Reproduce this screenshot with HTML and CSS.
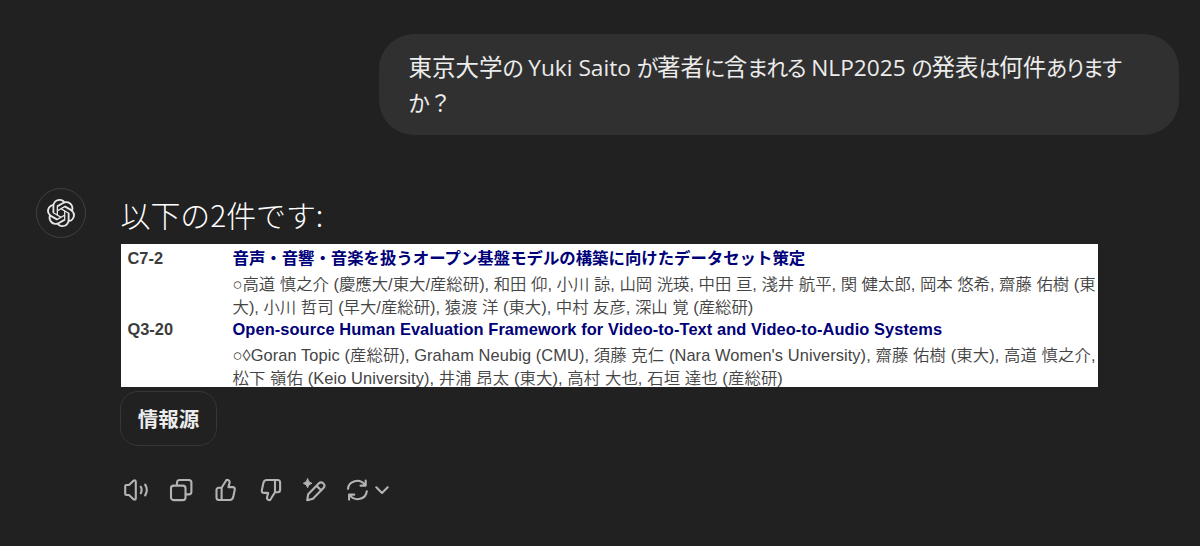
FILE: index.html
```html
<!DOCTYPE html>
<html lang="ja">
<head>
<meta charset="utf-8">
<title>Chat</title>
<link rel="stylesheet" href="styles.css">
</head>
<body>
<main class="chat">
  <div class="bubble">
    <span class="line">東京大学<span class="kana">の</span><span class="latin"> Yuki Saito </span><span class="kana">が</span>著者<span class="kana">に</span>含<span class="kana">まれる</span><span class="latin"> NLP2025 </span><span class="kana">の</span>発表<span class="kana">は</span>何件<span class="kana">あります</span></span>
    <span class="line"><span class="kana">か</span><span class="mark">？</span></span>
  </div>
  <section class="reply">
    <div class="avatar">
      <svg width="28" height="28" viewBox="0 0 24 24" fill="currentColor"><path d="M22.2819 9.8211a5.9847 5.9847 0 0 0-.5157-4.9108 6.0462 6.0462 0 0 0-6.5098-2.9A6.0651 6.0651 0 0 0 4.9807 4.1818a5.9847 5.9847 0 0 0-3.9977 2.9 6.0462 6.0462 0 0 0 .7427 7.0966 5.98 5.98 0 0 0 .511 4.9107 6.051 6.051 0 0 0 6.5146 2.9001A5.9847 5.9847 0 0 0 13.2599 24a6.0557 6.0557 0 0 0 5.7718-4.2058 5.9894 5.9894 0 0 0 3.9977-2.9001 6.0557 6.0557 0 0 0-.7475-7.0729zm-9.022 12.6081a4.4755 4.4755 0 0 1-2.8764-1.0408l.1419-.0804 4.7783-2.7582a.7948.7948 0 0 0 .3927-.6813v-6.7369l2.02 1.1686a.071.071 0 0 1 .038.052v5.5826a4.504 4.504 0 0 1-4.4945 4.4944zm-9.6607-4.1254a4.4708 4.4708 0 0 1-.5346-3.0137l.142.0852 4.783 2.7582a.7712.7712 0 0 0 .7806 0l5.8428-3.3685v2.3324a.0804.0804 0 0 1-.0332.0615L9.74 19.9502a4.4992 4.4992 0 0 1-6.1408-1.6464zM2.3408 7.8956a4.485 4.485 0 0 1 2.3655-1.9728V11.6a.7664.7664 0 0 0 .3879.6765l5.8144 3.3543-2.0201 1.1685a.0757.0757 0 0 1-.071 0l-4.8303-2.7865A4.504 4.504 0 0 1 2.3408 7.872zm16.5963 3.8558L13.1038 8.364 15.1192 7.2a.0757.0757 0 0 1 .071 0l4.8303 2.7913a4.4944 4.4944 0 0 1-.6765 8.1042v-5.6772a.79.79 0 0 0-.407-.667zm2.0107-3.0231l-.142-.0852-4.7735-2.7818a.7759.7759 0 0 0-.7854 0L9.409 9.2297V6.8974a.0662.0662 0 0 1 .0284-.0615l4.8303-2.7866a4.4992 4.4992 0 0 1 6.6802 4.66zM8.3065 12.863l-2.02-1.1638a.0804.0804 0 0 1-.038-.0567V6.0742a4.4992 4.4992 0 0 1 7.3757-3.4537l-.142.0805L8.704 5.459a.7948.7948 0 0 0-.3927.6813zm1.0976-2.3654l2.602-1.4998 2.6069 1.4998v2.9994l-2.5974 1.4997-2.6067-1.4997Z"/></svg>
    </div>
    <div class="content">
      <h1 class="heading">以下の2件です:</h1>
      <div class="papers">
        <div class="code">C7-2</div>
        <div class="paper">
          <div class="title"><span class="line">音声・音響・音楽を扱うオープン基盤モデルの構築に向けたデータセット策定</span></div>
          <div class="authors">
            <span class="line">○高道 慎之介 (慶應大/東大/産総研), 和田 仰, 小川 諒, 山岡 洸瑛, 中田 亘, 淺井 航平, 関 健太郎, 岡本 悠希, 齋藤 佑樹 (東</span>
            <span class="line">大), 小川 哲司 (早大/産総研), 猿渡 洋 (東大), 中村 友彦, 深山 覚 (産総研)</span>
          </div>
        </div>
        <div class="code">Q3-20</div>
        <div class="paper">
          <div class="title english"><span class="line">Open-source Human Evaluation Framework for Video-to-Text and Video-to-Audio Systems</span></div>
          <div class="authors english">
            <span class="line">○◊Goran Topic (産総研), Graham Neubig (CMU), 須藤 克仁 (Nara Women's University), 齋藤 佑樹 (東大), 高道 慎之介,</span>
            <span class="line">松下 嶺佑 (Keio University), 井浦 昂太 (東大), 高村 大也, 石垣 達也 (産総研)</span>
          </div>
        </div>
      </div>
      <button class="sources">情報源</button>
      <div class="actions">
        <svg width="28" height="28" viewBox="0 0 28 28"><path d="M4.200 10.2q0-1.2 1.2-1.2H8l4.200-4q2.600-1.700 2.600 1v16q0 2.700-2.600 1L8 19H5.400q-1.200 0-1.200-1.200zM19.800 10.800q1.700 3.200 0 6.400M24.200 8.600q3.200 5.400 0 10.800"/></svg>
        <svg width="28" height="28" viewBox="0 0 28 28"><rect x="5" y="9.600" width="14.500" height="14.500" rx="2.600"/><path d="M11 9V6.600Q11 4 13.600 4h9.200q2.600 0 2.600 2.600v9.200q0 2.600-2.600 2.600h-2.900"/></svg>
        <svg width="28" height="28" viewBox="0 0 28 28"><path id="thumb" d="M11.600 11.800 16 4.700q.9-1.300 2.300-.6 1.800 1 1.200 3l-1.100 4h4.100q2.900 0 2.200 3l-1.500 7q-.7 2.900-3.300 2.900H9q-2.500 0-2.500-2.500v-7.200q0-2.500 2.500-2.500zM11.600 11.800V24"/></svg>
        <svg width="28" height="28" viewBox="0 0 28 28"><use href="#thumb" transform="rotate(180 15.800 14)"/></svg>
        <svg width="28" height="28" viewBox="0 0 28 28"><path d="M8.200 24.300 9.200 18.200 19.700 7.400q2.300-2.200 4.700 0 2.200 2.400 0 4.700L13.900 22.700zM17.500 9.700l4.800 4.800"/><path class="solid" d="M8.600 2.900q.7 3.700 4.300 4.400-3.600.7-4.300 4.400Q7.900 8 4.300 7.300 7.900 6.600 8.600 2.900z"/></svg>
        <svg width="28" height="28" viewBox="0 0 28 28"><path d="M4 12.800C4.600 4.800 15.600 1.700 21 9M21.700 4.600v5h-5.200M22.800 15.200c-.6 8-11.600 11.100-17 3.800M5.100 23.600v-5h5.200"/></svg>
        <svg class="chevron" width="16" height="28" viewBox="0 0 16 28"><path d="M1.300 11.300 7 17l5.700-5.700"/></svg>
      </div>
    </div>
  </section>
</main>
</body>
</html>
```
FILE: styles.css
```css
* { box-sizing: border-box; }
body {
  margin: 0;
  background: #212121;
  font-family: "Liberation Sans", "Noto Sans CJK JP", sans-serif;
}
.chat {
  height: 546px;
  padding: 34px 21px 0 35.500px;
  display: flex;
  flex-direction: column;
  overflow: hidden;
}
.line { display: block; white-space: nowrap; }
.bubble {
  align-self: flex-end;
  width: 800px;
  height: 101px;
  padding: 15px 29.500px;
  border-radius: 35px;
  background: #303030;
  color: #ececec;
  font: 23.500px/35px "Noto Sans CJK JP", sans-serif;
}
.bubble .line { height: 35px; }
.kana { font-size: 21.800px; font-feature-settings: "palt"; letter-spacing: -1.150px; }
.latin { font-family: "Open Sans", sans-serif; font-size: 22.700px; }
.mark { font-size: 22px; margin-left: 1px; }
.reply { display: flex; gap: 35px; margin-top: 52.500px; }
.avatar {
  flex: none;
  width: 50px;
  height: 50px;
  display: grid;
  place-items: center;
  border: 1px solid #404040;
  border-radius: 50%;
  color: #e6e6e6;
}
.content { width: 977.500px; }
.heading {
  height: 56.500px;
  margin: 0;
  color: #fff;
  font: 300 29.900px/53px "Noto Sans CJK JP", sans-serif;
  white-space: nowrap;
}
.papers {
  height: 143px;
  display: grid;
  grid-template-columns: 105px 1fr;
  grid-template-rows: 71px 72px;
  padding-left: 7px;
  background: #fff;
  color: #444;
  font-size: 16.400px;
}
.code { font-weight: 700; line-height: 28px; color: #3c3c3c; }
.title { height: 29px; line-height: 28px; font-weight: 700; color: #000078; }
.authors { line-height: 23px; font-weight: 350; }
.english { letter-spacing: 0.090px; }
.sources {
  display: block;
  width: 97px;
  height: 55px;
  margin-top: 4px;
  margin-left: -0.500px;
  padding: 0;
  border: 1px solid #363636;
  border-radius: 18px;
  background: none;
  color: #ececec;
  font: 700 20.500px/1 "Noto Sans CJK JP", sans-serif;
}
.actions { display: flex; gap: 16.500px; margin: 30px 0 0 0.500px; }
.actions svg {
  flex: none;
  fill: none;
  stroke: #b4b4b4;
  stroke-width: 2.100;
  stroke-linecap: round;
  stroke-linejoin: round;
}
.actions .solid { fill: #b4b4b4; stroke-width: 1; }
.actions .chevron { margin-left: -13px; }
```
